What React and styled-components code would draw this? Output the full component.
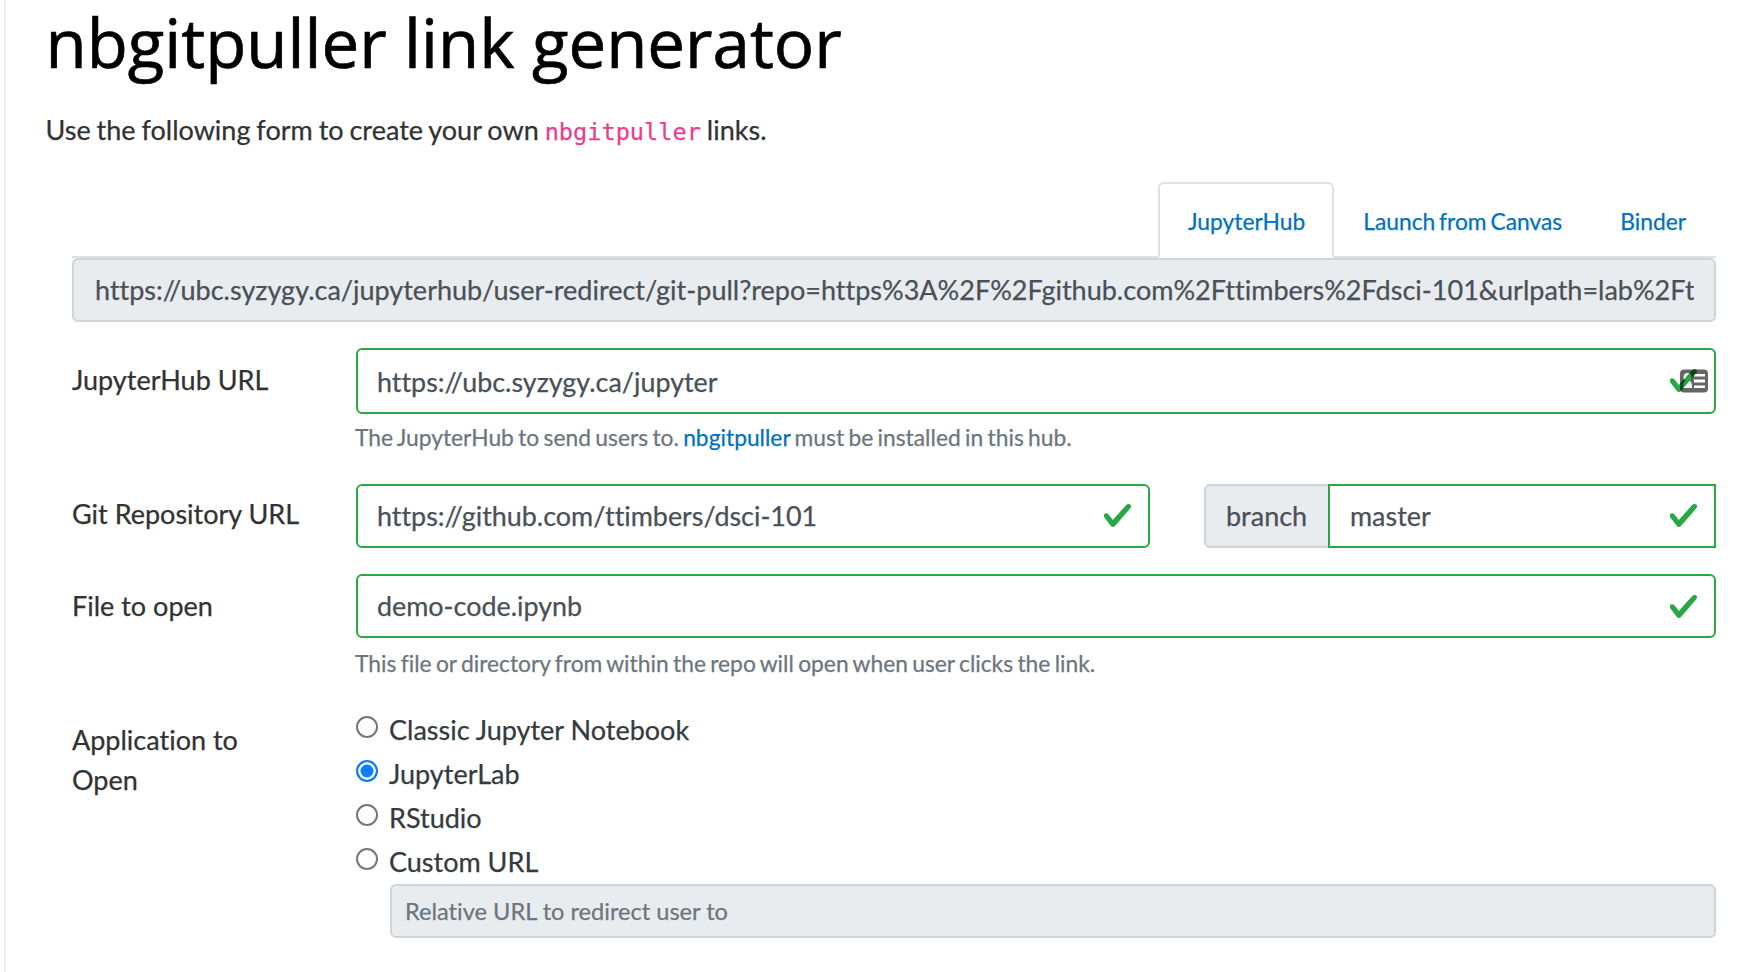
import React from 'react';
import styled, { createGlobalStyle } from 'styled-components';

const GlobalStyle = createGlobalStyle`
  *, *::before, *::after { box-sizing: border-box; }
  body { margin: 0; background: #fff; }
`;

const Page = styled.main`
  height: 972px;
  margin-left: 4px;
  padding: 0 32px 0 42px;
  border-left: 2px solid #eee;
  font-family: Lato, 'Liberation Sans', sans-serif;
  font-size: 27px;
  line-height: 40px;
  font-variant-ligatures: none;
  -webkit-text-stroke: 0.25px currentColor;
  color: #323232;
`;

const Title = styled.h1`
  margin: 0 0 0 -2.5px;
  font: 400 67.2px/84px 'Open Sans', sans-serif;
  -webkit-text-stroke: 0.7px #000;
  color: #000;
  white-space: nowrap;
`;

const Intro = styled.p`
  height: 40px;
  margin: 26px 0 0 -2.5px;
  word-spacing: -1px;
`;

const Code = styled.code`
  font-family: 'DejaVu Sans Mono', monospace;
  font-size: 23.6px;
  line-height: 0;
  color: #e83e8c;
`;

const Generator = styled.div`
  margin: 32px 0 0 24px;
`;

const Tabs = styled.nav`
  display: flex;
  justify-content: flex-end;
  height: 76px;
  border-bottom: 2px solid #dee2e6;
`;

const Tab = styled.a`
  height: 76px;
  padding: 17px 27px 0;
  border: 2px solid ${p => (p.$active ? '#dee2e6' : 'transparent')};
  border-bottom-color: ${p => (p.$active ? '#fff' : 'transparent')};
  border-radius: 6px 6px 0 0;
  font-size: 22.8px;
  word-spacing: -2px;
  color: #0071bc;
  white-space: nowrap;
  &:first-child { padding-left: 28px; }
  &:last-child { padding-right: 28px; }
`;

const Input = styled.input`
  display: block;
  width: 100%;
  min-width: 0;
  height: ${p => p.$height || 64}px;
  padding: 0 20px ${p => (p.$height ? 0 : 1)}px ${p => (p.$small ? 13 : p.$square ? 20 : 19)}px;
  border: 2px solid ${p => (p.$valid ? '#28a745' : '#ced4da')};
  border-radius: ${p => (p.$square ? '0' : '6px')};
  outline: none;
  background: ${p => (p.$valid ? '#fff' : '#e9ecef')};
  font-family: inherit;
  font-variant-ligatures: inherit;
  font-size: ${p => (p.$small ? 23.6 : p.$valid ? 26.9 : 27)}px;
  color: #495057;
  &::placeholder { color: #6c757d; opacity: 1; }
`;

const UrlInput = styled(Input)`
  padding: 0 20px 1px 21px;
`;

const Field = styled.div`
  position: relative;
  flex: 1;
`;

const CheckSvg = styled.svg`
  position: absolute;
  right: 17px;
  top: calc(50% - ${p => (p.$low ? 15 : 16)}px);
  width: 31px;
  height: 31px;
  fill: #28a745;
`;

const CardSvg = styled.svg`
  position: absolute;
  right: 8px;
  top: 21px;
  width: 28px;
  height: 24px;
`;

const Row = styled.div`
  display: grid;
  grid-template-columns: 284px 1fr;
  margin-top: ${p => p.$gap}px;
`;

const Label = styled.label`
  padding-top: ${p => p.$top}px;
  padding-right: 80px;
  white-space: ${p => (p.$wrap ? 'normal' : 'nowrap')};
`;

const Help = styled.small`
  display: block;
  height: ${p => 41 - p.$top}px;
  margin: ${p => p.$top}px 0 0 -1px;
  font-size: 22.8px;
  line-height: 34px;
  word-spacing: -1.5px;
  color: #6c757d;
`;

const Link = styled.a`
  color: #0071bc;
`;

const RepoFields = styled.div`
  display: grid;
  grid-template-columns: 794px 512px;
  justify-content: space-between;
`;

const Group = styled.div`
  display: flex;
`;

const Addon = styled.span`
  width: 124px;
  padding: 10px 0 0 20px;
  border: 2px solid #ced4da;
  border-right: 0;
  border-radius: 6px 0 0 6px;
  background: #e9ecef;
  color: #495057;
`;

const Option = styled.label`
  display: flex;
  height: 44px;
  color: #343a40;
`;

const Radio = styled.span`
  width: 22px;
  height: 22px;
  margin: 6px 11px 0 0;
  border: 2px solid ${p => (p.$checked ? '#0f7bff' : '#767676')};
  border-radius: 50%;
  background: ${p => (p.$checked ? '#0f7bff' : '#fff')};
  box-shadow: inset 0 0 0 ${p => (p.$checked ? 2.5 : 0)}px #fff;
`;

const CustomUrl = styled.div`
  margin-left: 34px;
  margin-top: -2px;
`;

const Check = ({ low }) => (
  <CheckSvg viewBox="0 0 8 8" $low={low}>
    <path d="M2.3 6.73L.6 4.53c-.4-1.04.46-1.4 1.1-.8l1.1 1.4 3.4-3.8c.6-.63 1.6-.27 1.2.7l-4 4.6c-.43.5-.8.4-1.1.1z" />
  </CheckSvg>
);

const ContactCard = () => (
  <CardSvg viewBox="0 0 28 24">
    <path
      fill="#000"
      fillOpacity=".6"
      fillRule="evenodd"
      d="M4 .5h20a4 4 0 0 1 4 4v15a4 4 0 0 1-4 4H4a4 4 0 0 1-4-4v-15a4 4 0 0 1 4-4zM14 5v2.500h11V5zM14 10.500v3h11v-3zM14 16.500v2.500h11v-2.500zM7.500 4a3.800 4 0 0 0-2 7.500C3.500 13 3 15 3 19h9c0-4-.5-6-2.500-7.500A3.800 4 0 0 0 7.500 4z"
    />
  </CardSvg>
);

const ValidInput = ({ value, height, square, low, children }) => (
  <Field>
    <Input $valid $height={height} $square={square} defaultValue={value} />
    <Check low={low} />
    {children}
  </Field>
);

const options = ['Classic Jupyter Notebook', 'JupyterLab', 'RStudio', 'Custom URL'];

export default function App() {
  return (
    <Page>
      <GlobalStyle />
      <Title>nbgitpuller link generator</Title>
      <Intro>
        Use the following form to create your own <Code>nbgitpuller</Code> links.
      </Intro>
      <Generator>
        <Tabs>
          <Tab $active>JupyterHub</Tab>
          <Tab>Launch from Canvas</Tab>
          <Tab>Binder</Tab>
        </Tabs>
        <UrlInput
          readOnly
          value="https://ubc.syzygy.ca/jupyterhub/user-redirect/git-pull?repo=https%3A%2F%2Fgithub.com%2Fttimbers%2Fdsci-101&urlpath=lab%2Ftree%2Fdsci-101%2Fdemo-code.ipynb"
        />
        <Row $gap={26}>
          <Label $top={12}>JupyterHub URL</Label>
          <div>
            <ValidInput value="https://ubc.syzygy.ca/jupyter" height={66}>
              <ContactCard />
            </ValidInput>
            <Help $top={6}>
              The JupyterHub to send users to. <Link>nbgitpuller</Link> must be installed in this hub.
            </Help>
          </div>
        </Row>
        <Row $gap={29}>
          <Label $top={10}>Git Repository URL</Label>
          <RepoFields>
            <ValidInput value="https://github.com/ttimbers/dsci-101" />
            <Group>
              <Addon>branch</Addon>
              <ValidInput value="master" square />
            </Group>
          </RepoFields>
        </Row>
        <Row $gap={26}>
          <Label $top={12}>File to open</Label>
          <div>
            <ValidInput value="demo-code.ipynb" low />
            <Help $top={8}>This file or directory from within the repo will open when user clicks the link.</Help>
          </div>
        </Row>
        <Row $gap={31}>
          <Label $top={10} $wrap>Application to Open</Label>
          <div>
            {options.map(name => (
              <Option key={name}>
                <Radio $checked={name === 'JupyterLab'} />
                {name}
              </Option>
            ))}
            <CustomUrl>
              <Input disabled $small $height={54} placeholder="Relative URL to redirect user to" />
            </CustomUrl>
          </div>
        </Row>
      </Generator>
    </Page>
  );
}
